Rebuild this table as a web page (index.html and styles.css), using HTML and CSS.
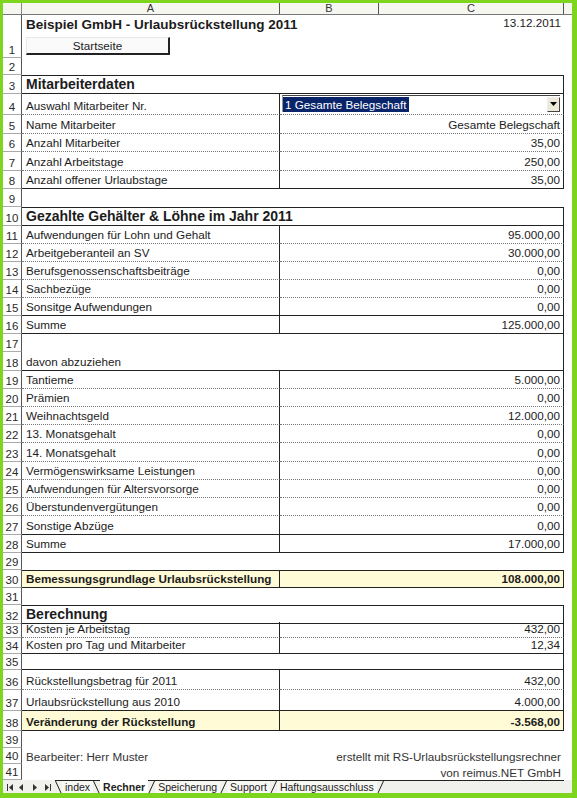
FILE: index.html
```html
<!DOCTYPE html>
<html lang="de">
<head>
<meta charset="utf-8">
<title>Urlaubsrückstellung 2011</title>
<link rel="stylesheet" href="styles.css">
</head>
<body>
<div class="sheet">
  <div class="r hdr">
    <div class="corner"></div>
    <div class="ch">A</div>
    <div class="ch">B</div>
    <div class="ch">C</div>
    <div class="chx"></div>
  </div>

  <div class="r h43">
    <div class="rh">1</div>
    <div class="c first">
      <div class="title">Beispiel GmbH - Urlaubsrückstellung 2011</div>
      <div class="btn">Startseite</div>
    </div>
    <div></div>
    <div class="c date">13.12.2011</div>
  </div>
  <div class="r h17"><div class="rh">2</div></div>
  <div class="r h19">
    <div class="rh">3</div>
    <div class="c full bt bb sec">Mitarbeiterdaten</div>
  </div>
  <div class="r h21">
    <div class="rh">4</div>
    <div class="c la dot">Auswahl Mitarbeiter Nr.</div>
    <div class="c va dot ddcell">
      <div class="dd"><span class="sel">1 Gesamte Belegschaft</span><span class="ddbtn"><svg width="7" height="4" viewBox="0 0 7 4"><path d="M0 0h7L3.5 4z" fill="#000"/></svg></span></div>
    </div>
  </div>
  <div class="r h19"><div class="rh">5</div><div class="c la dot">Name Mitarbeiter</div><div class="c va dot">Gesamte Belegschaft</div></div>
  <div class="r h18"><div class="rh">6</div><div class="c la dot">Anzahl Mitarbeiter</div><div class="c va dot">35,00</div></div>
  <div class="r h19"><div class="rh">7</div><div class="c la dot">Anzahl Arbeitstage</div><div class="c va dot">250,00</div></div>
  <div class="r h18"><div class="rh">8</div><div class="c la bb">Anzahl offener Urlaubstage</div><div class="c va bb">35,00</div></div>
  <div class="r h18"><div class="rh">9</div></div>

  <div class="r h19"><div class="rh">10</div><div class="c full bt bb sec">Gezahlte Gehälter &amp; Löhne im Jahr 2011</div></div>
  <div class="r h18"><div class="rh">11</div><div class="c la dot">Aufwendungen für Lohn und Gehalt</div><div class="c va dot">95.000,00</div></div>
  <div class="r h18"><div class="rh">12</div><div class="c la dot">Arbeitgeberanteil an SV</div><div class="c va dot">30.000,00</div></div>
  <div class="r h18"><div class="rh">13</div><div class="c la dot">Berufsgenossenschaftsbeiträge</div><div class="c va dot">0,00</div></div>
  <div class="r h18"><div class="rh">14</div><div class="c la dot">Sachbezüge</div><div class="c va dot">0,00</div></div>
  <div class="r h18"><div class="rh">15</div><div class="c la bb">Sonsitge Aufwendungen</div><div class="c va bb">0,00</div></div>
  <div class="r h18"><div class="rh">16</div><div class="c la bb">Summe</div><div class="c va bb">125.000,00</div></div>
  <div class="r h18"><div class="rh">17</div><div class="c full"></div></div>
  <div class="r h19"><div class="rh">18</div><div class="c full bb">davon abzuziehen</div></div>
  <div class="r h18"><div class="rh">19</div><div class="c la dot">Tantieme</div><div class="c va dot">5.000,00</div></div>
  <div class="r h18"><div class="rh">20</div><div class="c la dot">Prämien</div><div class="c va dot">0,00</div></div>
  <div class="r h18"><div class="rh">21</div><div class="c la dot">Weihnachtsgeld</div><div class="c va dot">12.000,00</div></div>
  <div class="r h18"><div class="rh">22</div><div class="c la dot">13. Monatsgehalt</div><div class="c va dot">0,00</div></div>
  <div class="r h19"><div class="rh">23</div><div class="c la dot">14. Monatsgehalt</div><div class="c va dot">0,00</div></div>
  <div class="r h18"><div class="rh">24</div><div class="c la dot">Vermögenswirksame Leistungen</div><div class="c va dot">0,00</div></div>
  <div class="r h18"><div class="rh">25</div><div class="c la dot">Aufwendungen für Altersvorsorge</div><div class="c va dot">0,00</div></div>
  <div class="r h18"><div class="rh">26</div><div class="c la dot">Überstundenvergütungen</div><div class="c va dot">0,00</div></div>
  <div class="r h19"><div class="rh">27</div><div class="c la bb">Sonstige Abzüge</div><div class="c va bb">0,00</div></div>
  <div class="r h18"><div class="rh">28</div><div class="c la bb">Summe</div><div class="c va bb">17.000,00</div></div>
  <div class="r h17"><div class="rh">29</div></div>

  <div class="r h18 hl"><div class="rh">30</div><div class="c la bt bb b">Bemessungsgrundlage Urlaubsrückstellung</div><div class="c va bt bb b">108.000,00</div></div>
  <div class="r h17"><div class="rh">31</div></div>

  <div class="r h17"><div class="rh">32</div><div class="c full bt bb sec">Berechnung</div></div>
  <div class="r h16"><div class="rh">33</div><div class="c la dot">Kosten je Arbeitstag</div><div class="c va dot">432,00</div></div>
  <div class="r h16"><div class="rh">34</div><div class="c la bb">Kosten pro Tag und Mitarbeiter</div><div class="c va bb">12,34</div></div>
  <div class="r h16"><div class="rh">35</div><div class="c full bb"></div></div>
  <div class="r h20"><div class="rh">36</div><div class="c la dot">Rückstellungsbetrag für 2011</div><div class="c va dot">432,00</div></div>
  <div class="r h21"><div class="rh">37</div><div class="c la bb">Urlaubsrückstellung aus 2010</div><div class="c va bb">4.000,00</div></div>
  <div class="r h20 hl"><div class="rh">38</div><div class="c la bb b">Veränderung der Rückstellung</div><div class="c va bb b">-3.568,00</div></div>
  <div class="r h17"><div class="rh">39</div></div>
  <div class="r h16"><div class="rh">40</div><div class="c plain">Bearbeiter: Herr Muster</div><div></div><div class="c plain right">erstellt mit RS-Urlaubsrückstellungsrechner</div></div>
  <div class="r h16"><div class="rh">41</div><div></div><div></div><div class="c plain right">von reimus.NET GmbH</div></div>

  <div class="tabbar">
    <div class="nav">
      <svg width="52" height="13" viewBox="0 0 52 13">
        <rect x="4" y="3" width="1" height="7" fill="#333"/>
        <path d="M6 6.5 10 3v7z" fill="#333"/>
        <path d="M16 6.5 20 3v7z" fill="#333"/>
        <path d="M30 3l4 3.5-4 3.5z" fill="#333"/>
        <path d="M42 3l4 3.5-4 3.5z" fill="#333"/>
        <rect x="47" y="3" width="1" height="7" fill="#333"/>
      </svg>
    </div>
    <div class="strip">
      <svg class="sl" width="7" height="13" viewBox="0 0 7 13"><path d="M0.5 0 6.5 13" stroke="#222" fill="none"/></svg>
      <span class="tab">index</span>
      <svg class="sl" width="7" height="13" viewBox="0 0 7 13"><path d="M0.5 0 6.5 13" stroke="#222" fill="none"/></svg>
      <span class="tab active">Rechner</span>
      <svg class="sl" width="7" height="13" viewBox="0 0 7 13"><path d="M0.5 13 6.5 0" stroke="#222" fill="none"/></svg>
      <span class="tab">Speicherung</span>
      <svg class="sl" width="7" height="13" viewBox="0 0 7 13"><path d="M0.5 13 6.5 0" stroke="#222" fill="none"/></svg>
      <span class="tab">Support</span>
      <svg class="sl" width="7" height="13" viewBox="0 0 7 13"><path d="M0.5 13 6.5 0" stroke="#222" fill="none"/></svg>
      <span class="tab">Haftungsausschluss</span>
      <svg class="sl" width="7" height="13" viewBox="0 0 7 13"><path d="M0.5 13 6.5 0" stroke="#222" fill="none"/></svg>
    </div>
    <div class="rest"></div>
    <div class="tail"></div>
  </div>
</div>
</body>
</html>
```

FILE: styles.css
```css
* { box-sizing: border-box; margin: 0; padding: 0; }
html, body { width: 577px; height: 798px; overflow: hidden; }
body {
  background: #7dd51e;
  font-family: "Liberation Sans", Arial, sans-serif;
  color: #1c1c1c;
}
.sheet {
  margin: 3px 5px 5px 3px;
  width: 569px;
  height: 790px;
  background: #fff;
  display: flex;
  flex-direction: column;
  overflow: hidden;
}
.r {
  display: grid;
  grid-template-columns: 19px 258px 99px 185px 8px;
  flex: none;
}
.hdr { height: 12px; background: #f6f6f1; border-bottom: 1px solid #777; }
.h16 { height: 16px; }
.h17 { height: 17px; }
.h18 { height: 18px; }
.h19 { height: 19px; }
.h20 { height: 20px; }
.h21 { height: 21px; }
.h43 { height: 43px; }

.corner { border-right: 1px solid #888; }
.ch {
  border-right: 1px solid #555;
  font-size: 11px;
  line-height: 11px;
  text-align: center;
  color: #333;
}
.rh {
  grid-column: 1;
  border-right: 1px solid #555;
  border-bottom: 1px solid #aaa;
  display: flex;
  align-items: flex-end;
  justify-content: center;
  font-size: 11.5px;
  line-height: 13px;
  color: #2a2a2a;
}
.c {
  display: flex;
  align-items: flex-end;
  padding: 0 3px 1px 4px;
  white-space: nowrap;
  font-size: 11.7px;
  line-height: 14px;
  min-width: 0;
}
.full { grid-column: 2 / 5; border-right: 1px solid #222; }
.la { grid-column: 2; border-right: 1px solid #222; }
.va { grid-column: 3 / 5; border-right: 1px solid #222; justify-content: flex-end; }
.bt { border-top: 1px solid #222; }
.bb { border-bottom: 1px solid #222; }
.dot { border-bottom: 1px dotted #777; }
.sec { font-weight: bold; font-size: 14px; line-height: 16px; }
.b { font-weight: bold; }
.hl .c { background: #fffbd6; }

.first {
  grid-column: 2;
  flex-direction: column;
  align-items: flex-start;
  justify-content: flex-start;
  padding: 2px 0 0 4px;
  overflow: visible;
}
.title { font-weight: bold; font-size: 13.5px; line-height: 16px; }
.btn {
  margin-top: 4px;
  width: 144px;
  height: 18px;
  border: 1px solid #e8e8e8;
  border-right: 2px solid #222;
  border-bottom: 2px solid #222;
  background: #fafafa;
  font-size: 11.7px;
  line-height: 15px;
  text-align: center;
}
.date {
  grid-column: 4;
  align-items: flex-start;
  justify-content: flex-end;
  padding-top: 1px;
}
.ddcell { padding: 1px 3px 2px 2px; align-items: stretch; }
.dd {
  flex: 1;
  display: flex;
  align-items: center;
  justify-content: space-between;
  border-top: 1px solid #444;
  border-left: 1px solid #999;
  background: #fff;
}
.sel {
  background: #0a246a;
  color: #fff;
  padding: 0 2px 0 2px;
  line-height: 15px;
}
.ddbtn {
  width: 13px;
  height: 15px;
  border: 1px solid #eee;
  border-right-color: #444;
  border-bottom-color: #444;
  background: #ece9d8;
  display: flex;
  align-items: center;
  justify-content: center;
}
.plain { color: #333; padding-bottom: 0; }
.right { justify-content: flex-end; }
.r > .plain:first-of-type { grid-column: 2; }

.tabbar {
  flex: none;
  height: 15px;
  display: flex;
  align-items: stretch;
  background: #f0f0ec;
}
.nav { width: 52px; flex: none; }
.strip {
  display: flex;
  align-items: stretch;
  border-top: 1px solid #222;
  border-bottom: 1px solid #666;
}
.sl { flex: none; display: block; height: 13px; }
.tab {
  font-size: 10.5px;
  line-height: 13px;
  padding: 0 3px;
  color: #222;
  background: #f7f7f4;
}
.tab.active { font-weight: bold; background: #fff; margin-top: -1px; line-height: 14px; }
.rest { flex: 1; border-top: 1px solid #222; }
.tail { flex: none; width: 8px; }
```
